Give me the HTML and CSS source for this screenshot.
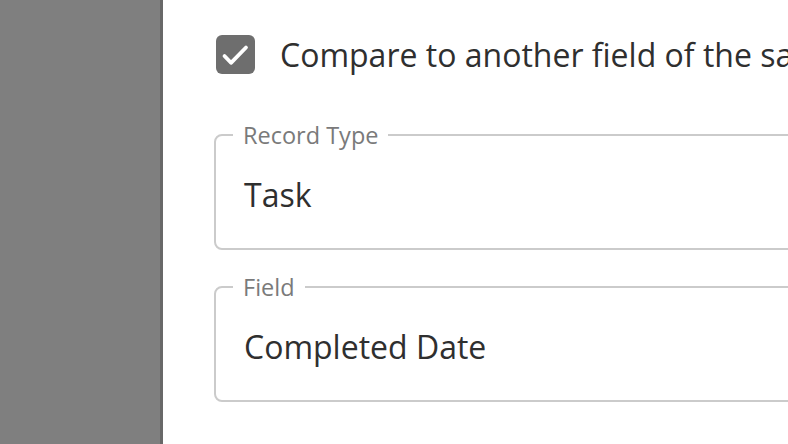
FILE: index.html
```html
<!DOCTYPE html>
<html>
<head>
<meta charset="utf-8">
<link rel="stylesheet" href="styles.css">
</head>
<body>
<div class="page">
  <div class="backdrop"></div>
  <div class="panel">
    <label class="check-row">
      <span class="checkbox">
        <svg width="39" height="39" viewBox="0 0 39 39"><path d="M8.5 21 L15 27.8 L30 12.5" fill="none" stroke="#fff" stroke-width="3.8" stroke-linecap="round" stroke-linejoin="round"/></svg>
      </span>
      <span class="check-text">Compare to another field of the same record type</span>
    </label>
    <div class="field">
      <span class="field-label">Record Type</span>
      <div class="field-value">Task</div>
    </div>
    <div class="field">
      <span class="field-label">Field</span>
      <div class="field-value">Completed Date</div>
    </div>
  </div>
</div>
</body>
</html>
```
FILE: styles.css
```css
html, body {
  margin: 0;
  padding: 0;
  background: #ffffff;
  overflow: hidden;
}
.page {
  display: flex;
  width: 788px;
  height: 444px;
  overflow: hidden;
  font-family: "Open Sans", "Noto Sans", sans-serif;
}
.backdrop {
  flex: 0 0 160px;
  background: #7f7f7f;
  border-right: 3px solid #686868;
}
.panel {
  flex: 1 1 auto;
  padding: 35px 0 0 53px;
  display: flex;
  flex-direction: column;
  min-width: 0;
  overflow: hidden;
}
.check-row {
  display: flex;
  align-items: center;
  height: 39px;
  white-space: nowrap;
}
.checkbox {
  width: 39px;
  height: 39px;
  border-radius: 6px;
  background: #6e6e6e;
  flex: 0 0 39px;
  display: flex;
}
.check-text {
  margin-left: 25px;
  font-size: 32px;
  color: #2f2f2f;
}
.field {
  flex: 0 0 auto;
  width: 700px;
  border: 2px solid #cbcbcb;
  border-radius: 8px;
  margin-top: 60px;
  height: 112px;
  margin-left: -2px;
}
.field + .field {
  margin-top: 36px;
}
.field-label {
  display: inline-block;
  margin: -15px 0 0 17px;
  padding: 0 10px;
  background: #fff;
  font-size: 23.5px;
  line-height: 28px;
  height: 28px;
  color: #7a7a7a;
  vertical-align: top;
}
.field-value {
  margin: 15px 0 0 28px;
  font-size: 32px;
  line-height: 44px;
  color: #2f2f2f;
}
```
